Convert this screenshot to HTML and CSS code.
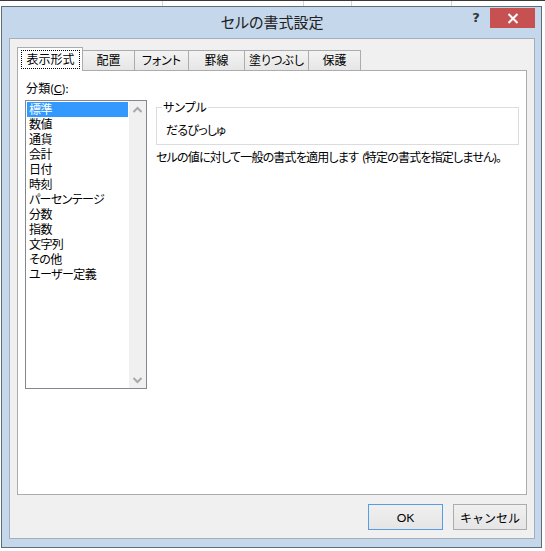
FILE: index.html
```html
<!DOCTYPE html>
<html lang="ja">
<head>
<meta charset="utf-8">
<title>セルの書式設定</title>
<link rel="stylesheet" href="styles.css">
</head>
<body>
<div class="screen">
  <div class="sheet">
    <div class="cell c1"></div>
    <div class="cell c2"></div>
    <div class="cell c3"></div>
    <div class="cell c4"></div>
    <div class="cell c5"></div>
  </div>
  <div class="window">
    <div class="titlebar">
      <div></div>
      <div class="title">セルの書式設定</div>
      <div class="caption-btns">
        <span class="help">?</span>
        <span class="close"><svg width="12" height="11" viewBox="0 0 12 11"><path d="M1.5 1 L10.5 10 M10.5 1 L1.5 10" stroke="#fff" stroke-width="2" fill="none"/></svg></span>
      </div>
    </div>
    <div class="client">
      <div class="tabs">
        <div class="tab active"><span class="focus">表示形式</span></div>
        <div class="tab">配置</div>
        <div class="tab">フォント</div>
        <div class="tab">罫線</div>
        <div class="tab">塗りつぶし</div>
        <div class="tab">保護</div>
      </div>
      <div class="panel">
        <div class="label">分類(<u>C</u>):</div>
        <div class="listbox">
          <ul class="items">
            <li class="sel">標準</li>
            <li>数値</li>
            <li>通貨</li>
            <li>会計</li>
            <li>日付</li>
            <li>時刻</li>
            <li>パーセンテージ</li>
            <li>分数</li>
            <li>指数</li>
            <li>文字列</li>
            <li>その他</li>
            <li>ユーザー定義</li>
          </ul>
          <div class="scrollbar">
            <svg width="17" height="17" viewBox="0 0 17 17"><path d="M4.5 11 L8.5 7 L12.5 11" stroke="#a8a8a8" stroke-width="2" fill="none"/></svg>
            <svg width="17" height="17" viewBox="0 0 17 17"><path d="M4.5 7 L8.5 11 L12.5 7" stroke="#a8a8a8" stroke-width="2" fill="none"/></svg>
          </div>
        </div>
        <div class="right">
          <fieldset class="sample">
            <legend>サンプル</legend>
            <div class="sample-text">だるぴっしゅ</div>
          </fieldset>
          <p class="desc">セルの値に対して一般の書式を適用します (特定の書式を指定しません)。</p>
        </div>
      </div>
      <div class="buttons">
        <button class="btn ok">OK</button>
        <button class="btn cancel">キャンセル</button>
      </div>
    </div>
  </div>
</div>
</body>
</html>
```

FILE: styles.css
```css
* { box-sizing: border-box; }

body {
  margin: 0;
  font-family: Lato, "Noto Sans CJK JP", sans-serif;
  font-size: 12px;
  color: #000;
  font-feature-settings: "palt";
}

.screen {
  width: 545px;
  height: 551px;
  overflow: hidden;
  background: #fff;
}

/* spreadsheet strip behind the dialog */
.sheet {
  height: 6px;
  border-top: 1px solid #3a3a3a;
  display: flex;
}
.cell {
  height: 100%;
  border-right: 1px solid #d4d4d4;
}
.c1 { width: 163px; }
.c2 { width: 141px; }
.c3 { width: 48px; }
.c4 { width: 100px; }
.c5 { flex: 1; border-right: none; }

/* dialog window */
.window {
  margin-left: 1px;
  width: 541px;
  height: 542px;
  border: 1px solid #5f6b78;
  background: #c4d7eb;
  padding: 0 6px 8px 7px;
  display: flex;
  flex-direction: column;
}

.titlebar {
  height: 31px;
  display: grid;
  grid-template-columns: 1fr auto 1fr;
  align-items: start;
}
.title {
  font-size: 15px;
  line-height: 20px;
  margin-top: 5px;
  color: #222;
}
.caption-btns {
  justify-self: end;
  display: flex;
  align-items: flex-start;
}
.help {
  width: 20px;
  margin-top: 1px;
  margin-right: 4px;
  text-align: center;
  font-family: "DejaVu Sans", sans-serif;
  font-weight: bold;
  font-size: 13px;
  line-height: 20px;
  color: #333;
}
.close {
  width: 45px;
  height: 20px;
  margin-top: 1px;
  background: #c75050;
  display: flex;
  align-items: center;
  justify-content: center;
}

.client {
  height: 501px;
  border: 1px solid #a4afbb;
  background: #f0f0f0;
  padding: 8px 7px 0;
  display: flex;
  flex-direction: column;
}

/* tabs */
.tabs {
  height: 23px;
  display: flex;
  align-items: flex-end;
}
.tab {
  height: 20px;
  margin-left: -1px;
  border: 1px solid #acacac;
  border-bottom: none;
  background: linear-gradient(#f3f3f3, #e6e6e6);
  text-align: center;
  line-height: 19px;
  white-space: nowrap;
}
.tab:nth-child(1) { width: 66px; margin-left: 0; }
.tab:nth-child(2) { width: 53px; }
.tab:nth-child(3) { width: 55px; }
.tab:nth-child(4) { width: 57px; }
.tab:nth-child(5) { width: 65px; }
.tab:nth-child(6) { width: 53px; }
.tab.active {
  height: 24px;
  margin-bottom: -1px;
  padding: 2px 2px 2px 3px;
  background: #fff;
  position: relative;
  z-index: 1;
}
.focus {
  display: block;
  height: 19px;
  border: 1px dotted #000;
  line-height: 17px;
}

/* panel */
.panel {
  height: 425px;
  border: 1px solid #acacac;
  background: #fff;
  padding: 10px 7px 0 7px;
  display: grid;
  grid-template-columns: 122px 1fr;
  grid-template-rows: auto auto;
  align-content: start;
  column-gap: 9px;
  row-gap: 4px;
}
.label {
  grid-column: 1;
  grid-row: 1;
  padding-left: 1px;
  line-height: 15px;
  letter-spacing: 0.2px;
}

.listbox {
  grid-column: 1;
  grid-row: 2;
  height: 289px;
  border: 1px solid #828790;
  display: flex;
}
.items {
  flex: 1;
  list-style: none;
  margin: 0;
  padding: 1px;
}
.items li {
  height: 15px;
  line-height: 15px;
  padding-left: 2px;
  white-space: nowrap;
  letter-spacing: -0.6px;
}
.items li.sel {
  background: #3399ff;
  color: #fff;
}
.scrollbar {
  width: 17px;
  background: #f0f0f0;
  display: flex;
  flex-direction: column;
  justify-content: space-between;
}
.scrollbar svg { display: block; }

.right {
  grid-column: 2;
  grid-row: 2;
  min-width: 0;
}
.sample {
  margin: 0;
  min-width: 0;
  border: 1px solid #dcdcdc;
  padding: 8px 9px 6px;
}
.sample legend {
  margin-left: -4px;
  padding: 0 1px;
  line-height: 15px;
}
.sample-text {
  line-height: 15px;
  letter-spacing: -0.8px;
}
.desc {
  margin: 5px 0 0;
  line-height: 15px;
  white-space: nowrap;
  letter-spacing: -0.8px;
  word-spacing: 2px;
}

/* buttons */
.buttons {
  display: flex;
  justify-content: flex-end;
  gap: 10px;
  margin-top: 9px;
}
.btn {
  height: 26px;
  padding: 0;
  border: 1px solid #acacac;
  background: linear-gradient(#f0f0f0, #e5e5e5);
  font-family: inherit;
  font-size: 12px;
  color: #000;
}
.btn.ok {
  width: 75px;
  border-color: #569de5;
}
.btn.cancel {
  width: 74px;
}
```
